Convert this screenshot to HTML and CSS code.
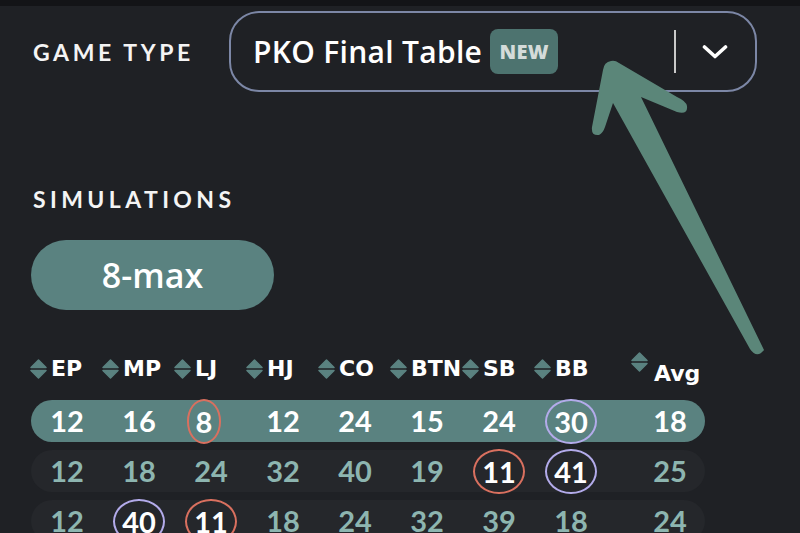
FILE: index.html
```html
<!DOCTYPE html>
<html lang="en">
<head>
<meta charset="utf-8">
<title>Game type</title>
<link rel="stylesheet" href="styles.css">
</head>
<body>
<div class="topbar"></div>
<main class="page">
  <section class="game-row">
    <div class="label label-game">GAME TYPE</div>
    <div class="select">
      <span class="select-value">PKO Final Table</span>
      <span class="badge">NEW</span>
      <span class="select-sep"></span>
      <svg class="chev" width="26" height="16" viewBox="0 0 26 16"><polyline points="2.5,3 13,12.5 23.5,3" fill="none" stroke="#ffffff" stroke-width="3.6" stroke-linecap="round" stroke-linejoin="round"/></svg>
    </div>
  </section>

  <section class="sims">
    <div class="label label-sims">SIMULATIONS</div>
    <div class="pill">8-max</div>
  </section>

  <section class="table">
    <div class="thead">
      <div class="th"><svg class="sort" width="17" height="20" viewBox="0 0 17 20"><path d="M8.5 1 L16 8.5 H1 Z" /><path d="M1 11.5 H16 L8.5 19 Z"/></svg><span>EP</span></div>
      <div class="th"><svg class="sort" width="17" height="20" viewBox="0 0 17 20"><path d="M8.5 1 L16 8.5 H1 Z" /><path d="M1 11.5 H16 L8.5 19 Z"/></svg><span>MP</span></div>
      <div class="th"><svg class="sort" width="17" height="20" viewBox="0 0 17 20"><path d="M8.5 1 L16 8.5 H1 Z" /><path d="M1 11.5 H16 L8.5 19 Z"/></svg><span>LJ</span></div>
      <div class="th"><svg class="sort" width="17" height="20" viewBox="0 0 17 20"><path d="M8.5 1 L16 8.5 H1 Z" /><path d="M1 11.5 H16 L8.5 19 Z"/></svg><span>HJ</span></div>
      <div class="th"><svg class="sort" width="17" height="20" viewBox="0 0 17 20"><path d="M8.5 1 L16 8.5 H1 Z" /><path d="M1 11.5 H16 L8.5 19 Z"/></svg><span>CO</span></div>
      <div class="th"><svg class="sort" width="17" height="20" viewBox="0 0 17 20"><path d="M8.5 1 L16 8.5 H1 Z" /><path d="M1 11.5 H16 L8.5 19 Z"/></svg><span>BTN</span></div>
      <div class="th"><svg class="sort" width="17" height="20" viewBox="0 0 17 20"><path d="M8.5 1 L16 8.5 H1 Z" /><path d="M1 11.5 H16 L8.5 19 Z"/></svg><span>SB</span></div>
      <div class="th"><svg class="sort" width="17" height="20" viewBox="0 0 17 20"><path d="M8.5 1 L16 8.5 H1 Z" /><path d="M1 11.5 H16 L8.5 19 Z"/></svg><span>BB</span></div>
      <div class="th th-avg"><svg class="sort" width="17" height="20" viewBox="0 0 17 20"><path d="M8.5 1 L16 8.5 H1 Z" /><path d="M1 11.5 H16 L8.5 19 Z"/></svg><span class="avg-label">Avg</span></div>
    </div>

    <div class="trow active">
      <div class="td">12</div><div class="td">16</div><div class="td"><span class="ring red ring-left">8</span></div><div class="td">12</div><div class="td">24</div><div class="td">15</div><div class="td">24</div><div class="td"><span class="ring violet">30</span></div><div class="td td-avg">18</div>
    </div>
    <div class="trow">
      <div class="td">12</div><div class="td">18</div><div class="td">24</div><div class="td">32</div><div class="td">40</div><div class="td">19</div><div class="td"><span class="ring red">11</span></div><div class="td"><span class="ring violet">41</span></div><div class="td td-avg">25</div>
    </div>
    <div class="trow">
      <div class="td">12</div><div class="td"><span class="ring violet">40</span></div><div class="td"><span class="ring red">11</span></div><div class="td">18</div><div class="td">24</div><div class="td">32</div><div class="td">39</div><div class="td">18</div><div class="td td-avg">24</div>
    </div>
  </section>
</main>

<svg class="arrow" width="800" height="533" viewBox="0 0 800 533">
  <path d="M611 61 Q604 62 603 70 L592 127 Q591 136 599 135 Q603 133 605 127 L613 103 L750 349 Q757 359 764 350 L641 97 L677 112 Q688 115 687 106 Q686 101 677 97 L619 63 Q615 60 611 61 Z" />
</svg>
</body>
</html>
```

FILE: styles.css
```css
* { box-sizing: border-box; }

html, body {
  margin: 0;
  padding: 0;
  width: 800px;
  height: 533px;
  overflow: hidden;
}

body {
  background: #1f2125;
  color: #ffffff;
  font-family: "Lato", "Open Sans", sans-serif;
  position: relative;
}

.topbar {
  height: 6px;
  background: #131417;
}

.page {
  padding-left: 31px;
}

.label {
  font-family: "Lato", sans-serif;
  font-weight: 700;
  font-size: 23px;
  line-height: 26px;
  color: #f4f4f4;
  padding-left: 2px;
}

.label-game { letter-spacing: 3.6px; }
.label-sims { letter-spacing: 4.4px; }

.game-row {
  display: grid;
  grid-template-columns: 198px 528px;
  align-items: center;
  margin-top: 5px;
}

.select {
  height: 81px;
  border: 2px solid #7c87a6;
  border-radius: 30px;
  display: flex;
  align-items: center;
  padding-left: 22px;
  padding-right: 27px;
}

.select-value {
  font-family: "Open Sans", sans-serif;
  font-weight: 600;
  font-size: 30px;
  letter-spacing: 0.3px;
  color: #ffffff;
}

.badge {
  margin-left: 8px;
  height: 45px;
  width: 68px;
  border-radius: 8px;
  background: #4d736f;
  color: #d4dbd9;
  font-family: "Open Sans", sans-serif;
  font-weight: 800;
  font-size: 20px;
  display: flex;
  align-items: center;
  justify-content: center;
  letter-spacing: 0.3px;
}

.select-sep {
  margin-left: auto;
  width: 2px;
  height: 43px;
  background: #c9c9c9;
  margin-right: 26px;
}

.chev { display: block; }

.sims {
  margin-top: 94px;
}

.pill {
  margin-top: 28px;
  width: 243px;
  height: 70px;
  border-radius: 35px;
  background: #5a8280;
  display: flex;
  align-items: center;
  justify-content: center;
  font-family: "Open Sans", sans-serif;
  font-weight: 600;
  font-size: 34px;
  color: #ffffff;
}

.table {
  margin-top: 42px;
  width: 674px;
}

.thead, .trow {
  display: grid;
  grid-template-columns: repeat(8, 72px) 1fr;
}

.thead {
  height: 24px;
  margin-bottom: 24px;
}

.th {
  display: flex;
  align-items: center;
  gap: 4px;
  font-family: "DejaVu Sans", sans-serif;
  font-weight: 700;
  font-size: 22px;
  line-height: 24px;
  color: #ffffff;
  margin-left: -1px;
}

.sort { display: block; flex: none; }
.sort path { fill: #5a8280; stroke: #5a8280; stroke-width: 1.5; stroke-linejoin: round; }

.th-avg {
  padding-left: 25px;
  align-items: flex-start;
}

.avg-label {
  margin-top: 10px;
  margin-left: 2px;
}

.trow {
  height: 42px;
  border-radius: 21px;
  background: #25272b;
  margin-bottom: 8px;
  align-items: center;
}

.trow.active {
  background: #5a8280;
}

.td {
  display: flex;
  justify-content: center;
  align-items: center;
  font-family: "Lato", sans-serif;
  font-weight: 700;
  font-size: 29px;
  line-height: 42px;
  color: #8db5b0;
}

.trow.active .td {
  color: #ffffff;
}

.td-avg {
  padding-left: 28px;
}

.ring {
  display: inline-flex;
  align-items: center;
  justify-content: center;
  height: 45px;
  margin: -2px 0;
  padding: 0 7px;
  border-radius: 50%;
  border: 2px solid;
  color: #ffffff;
  line-height: 1;
}

.ring-left { margin-right: 14px; }

.ring.red { border-color: #d9705f; }
.ring.violet { border-color: #b3abea; }

.arrow {
  position: absolute;
  left: 0;
  top: 0;
  pointer-events: none;
}

.arrow path { fill: #5b8679; }
```
